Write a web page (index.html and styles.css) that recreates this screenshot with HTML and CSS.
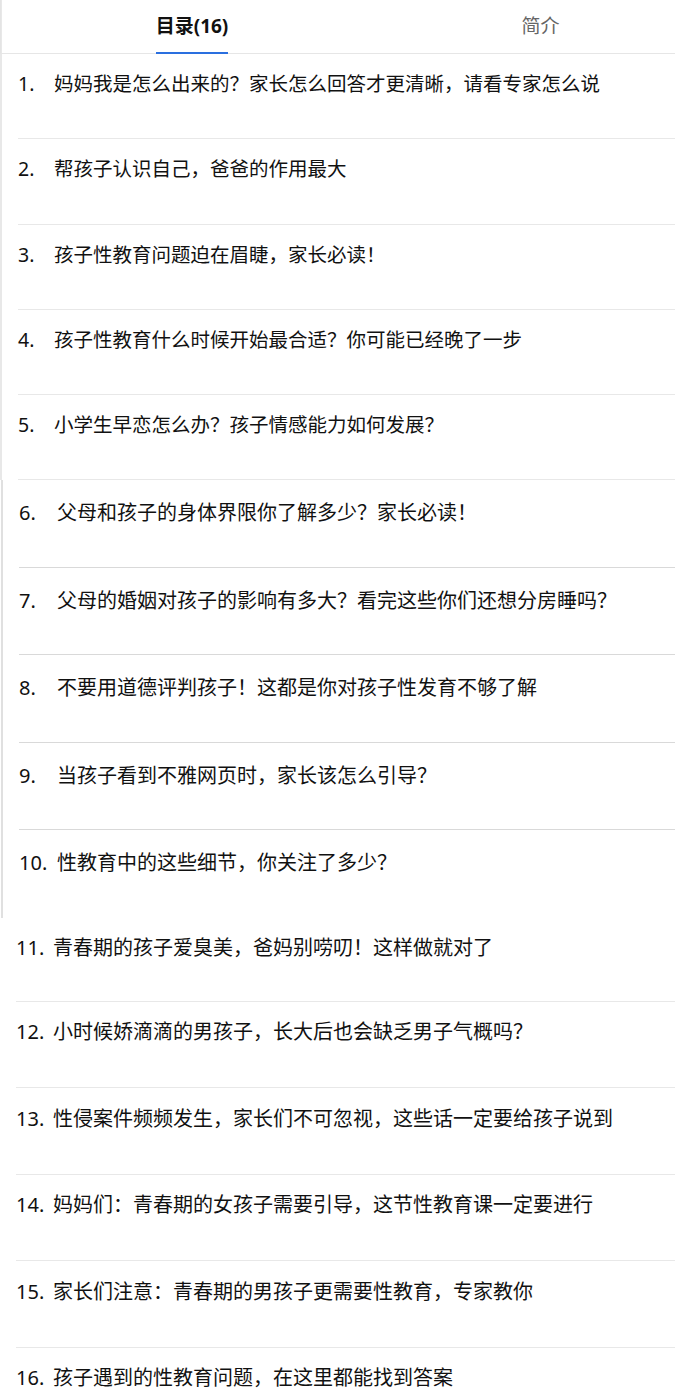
FILE: index.html
```html
<!DOCTYPE html>
<html lang="zh-CN">
<head>
  <meta charset="UTF-8" />
  <meta name="viewport" content="width=device-width, initial-scale=1.0"/>
  <title>目录</title>
  <link rel="stylesheet" href="styles.css">
</head>
<body>
  <div class="top">
    <header class="tabs">
      <div class="tab active"><span>目录(16)</span></div>
      <div class="tab tab-info"><span>简介</span></div>
    </header>

    <ul class="list list-a">
      <li class="item"><span class="num">1.</span><span class="title">妈妈我是怎么出来的？家长怎么回答才更清晰，请看专家怎么说</span></li>
      <li class="item"><span class="num">2.</span><span class="title">帮孩子认识自己，爸爸的作用最大</span></li>
      <li class="item"><span class="num">3.</span><span class="title">孩子性教育问题迫在眉睫，家长必读！</span></li>
      <li class="item"><span class="num">4.</span><span class="title">孩子性教育什么时候开始最合适？你可能已经晚了一步</span></li>
      <li class="item"><span class="num">5.</span><span class="title">小学生早恋怎么办？孩子情感能力如何发展？</span></li>
    </ul>
  </div>

  <ul class="list list-b">
    <li class="item"><span class="num">6.</span><span class="title">父母和孩子的身体界限你了解多少？家长必读！</span></li>
    <li class="item"><span class="num">7.</span><span class="title">父母的婚姻对孩子的影响有多大？看完这些你们还想分房睡吗？</span></li>
    <li class="item"><span class="num">8.</span><span class="title">不要用道德评判孩子！这都是你对孩子性发育不够了解</span></li>
    <li class="item"><span class="num">9.</span><span class="title">当孩子看到不雅网页时，家长该怎么引导？</span></li>
    <li class="item"><span class="num">10.</span><span class="title">性教育中的这些细节，你关注了多少？</span></li>
  </ul>

  <ul class="list list-c">
    <li class="item"><span class="num">11.</span><span class="title">青春期的孩子爱臭美，爸妈别唠叨！这样做就对了</span></li>
    <li class="item"><span class="num">12.</span><span class="title">小时候娇滴滴的男孩子，长大后也会缺乏男子气概吗？</span></li>
    <li class="item"><span class="num">13.</span><span class="title">性侵案件频频发生，家长们不可忽视，这些话一定要给孩子说到</span></li>
    <li class="item"><span class="num">14.</span><span class="title">妈妈们：青春期的女孩子需要引导，这节性教育课一定要进行</span></li>
    <li class="item"><span class="num">15.</span><span class="title">家长们注意：青春期的男孩子更需要性教育，专家教你</span></li>
    <li class="item"><span class="num">16.</span><span class="title">孩子遇到的性教育问题，在这里都能找到答案</span></li>
  </ul>
</body>
</html>
```

FILE: styles.css
```css
html, body {
  margin: 0; padding: 0;
  background: #fff;
}
body {
  width: 675px;
  overflow: hidden;
  font-family: "Noto Sans", "Noto Sans CJK SC", sans-serif;
  color: #111;
}

.top { border-left: 2px solid #e8e8e8; }

.tabs {
  display: flex;
  align-items: flex-start;
  box-sizing: border-box;
  height: 54px;
  padding-left: 17px;
  border-bottom: 1px solid #e6e6e6;
  margin-left: -2px;
  border-left: 1px solid #e4e4e4;
}
.tab {
  flex: 0 0 348px;
  box-sizing: border-box;
  text-align: center;
  font-size: 19px;
  line-height: 52px;
  color: #666;
}
.tab-info {
  flex: 1 1 auto;
  padding-left: 40px;
}
.tab span {
  display: inline-block;
  box-sizing: border-box;
  height: 54px;
}
.tab.active { color: #111; font-weight: bold; }
.tab.active span { border-bottom: 2px solid #2a6fdf; }

.list {
  list-style: none;
  margin: 0; padding: 0;
}
.item {
  display: flex;
  box-sizing: border-box;
  border-bottom: 1px solid #e8e8e8;
  line-height: 24px;
}
.num { flex: 0 0 auto; }
.title { white-space: nowrap; }

/* 1-5 */
.list-a { padding-left: 16px; }
.list-a .item {
  height: 85.25px;
  padding-top: 18px;
  font-size: 19.5px;
}
.list-a .num { width: 36px; }

/* 6-10 */
.list-b {
  margin-left: 1px;
  padding-left: 16px;
  border-left: 2px solid #e0e0e0;
}
.list-b .item {
  height: 87.5px;
  padding-top: 21px;
  font-size: 20px;
  border-bottom-color: #d9d9d9;
}
.list-b .item:last-child { border-bottom: none; }
.list-b .num { width: 38px; }

/* 11-16 */
.list-c { padding-left: 16px; }
.list-c .item {
  height: 86.5px;
  padding-top: 18.5px;
  font-size: 20px;
}
.list-c .item:first-child { height: 84px; padding-top: 18px; }
.list-c .item:last-child { border-bottom: none; }
.list-c .num { width: 37px; }
```
